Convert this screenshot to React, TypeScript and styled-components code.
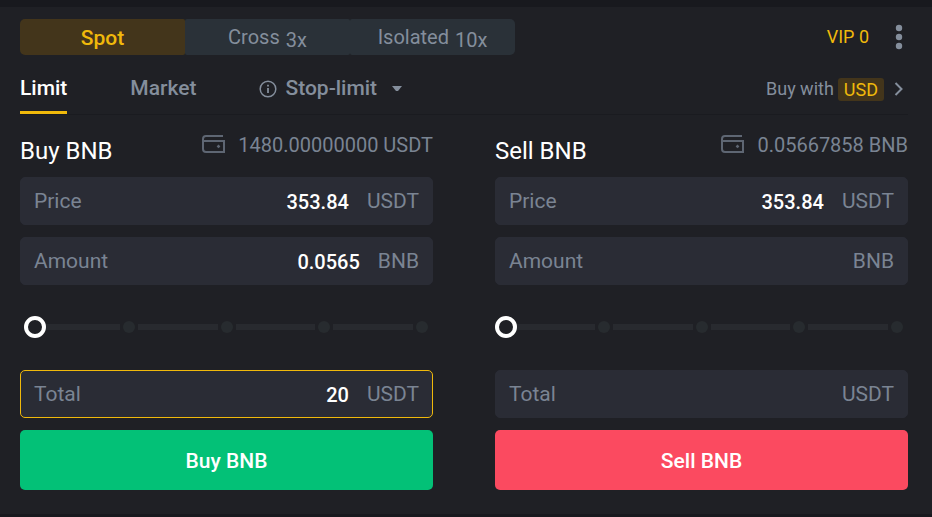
import React, { useState } from "react";
import styled, { createGlobalStyle, css } from "styled-components";

const color = {
  page: "#18191e",
  panel: "#1f2025",
  field: "#2a2c35",
  tab: "#2a3138",
  tabActive: "#43351b",
  track: "#282a2f",
  dot: "#272b2f",
  line: "#1a1b20",
  text: "#848e9c",
  muted: "#7a8493",
  icon: "#5e6673",
  yellow: "#f0b90b",
  white: "#ffffff",
  green: "#03c177",
  red: "#fb4a60",
};

const GlobalStyle = createGlobalStyle`
  *, *::before, *::after { box-sizing: border-box; }
  body {
    margin: 0;
    background: ${color.page};
    color: ${color.text};
    font-family: Roboto, "Liberation Sans", sans-serif;
    font-size: 20px;
    line-height: 24px;
  }
  button, input { font: inherit; color: inherit; border: 0; margin: 0; padding: 0; background: none; }
  button { cursor: pointer; }
`;

const Page = styled.div`
  padding: 7px 0 3px;
`;

const Panel = styled.main`
  background: ${color.panel};
  padding: 12px 24px 24px 20px;
`;

const TopBar = styled.header`
  display: flex;
  align-items: center;
  justify-content: space-between;
`;

const ModeTabs = styled.div`
  display: grid;
  grid-template-columns: repeat(3, 165px);
`;

const ModeTab = styled.button<{ $active?: boolean }>`
  height: 36px;
  padding-top: 2px;
  border-radius: 2px;
  background: ${(p) => (p.$active ? color.tabActive : color.tab)};
  color: ${(p) => (p.$active ? color.yellow : color.text)};
  font-size: ${(p) => (p.$active ? 21 : 20)}px;
  font-weight: ${(p) => (p.$active ? 500 : 400)};
  &:first-child { border-radius: 5px 2px 2px 5px; }
  &:last-child { border-radius: 2px 5px 5px 2px; }
`;

const Leverage = styled.span`
  display: inline-block;
  padding: 3px 0 0 6px;
  vertical-align: top;
`;

const Account = styled.div`
  display: flex;
  align-items: center;
  gap: 23px;
  padding-right: 2px;
`;

const VipLink = styled.a`
  color: ${color.yellow};
  font-size: 18px;
  text-decoration: none;
`;

const IconButton = styled.button`
  display: flex;
`;

const OrderBar = styled.nav`
  display: flex;
  align-items: flex-end;
  justify-content: space-between;
  border-bottom: 1px solid ${color.line};
  padding-top: 18px;
`;

const OrderTabs = styled.div`
  display: flex;
  gap: 63px;
`;

const OrderTab = styled.button<{ $active?: boolean }>`
  display: flex;
  align-items: center;
  gap: 8px;
  height: 41px;
  padding-bottom: 8px;
  font-weight: 500;
  font-size: 21px;
  border-bottom: 3px solid transparent;
  ${(p) =>
    p.$active &&
    css`
      color: ${color.white};
      border-color: ${color.yellow};
    `}
`;

const FiatLink = styled.a`
  display: flex;
  align-items: center;
  gap: 4px;
  padding: 0 5px 13px 0;
  color: ${color.text};
  font-size: 18px;
  text-decoration: none;
  svg { margin-left: 6px; }
`;

const Currency = styled.span`
  padding: 0 6px;
  border-radius: 3px;
  background: ${color.tabActive};
  color: ${color.yellow};
  line-height: 23px;
`;

const Forms = styled.div`
  display: grid;
  grid-template-columns: 1fr 1fr;
  gap: 62px;
  padding-top: 16px;
`;

const Form = styled.form`
  display: flex;
  flex-direction: column;
  gap: 12px;
  min-width: 0;
`;

const FormHead = styled.div`
  display: flex;
  justify-content: space-between;
  height: 34px;
`;

const Title = styled.h2`
  margin: 0;
  padding-top: 6px;
  color: ${color.white};
  font-size: 24px;
  font-weight: 400;
  line-height: 28px;
`;

const Balance = styled.div`
  display: flex;
  align-items: center;
  align-self: flex-start;
  gap: 12px;
  padding-top: 2px;
  color: ${color.muted};
`;

const Field = styled.label<{ $focused?: boolean }>`
  display: flex;
  align-items: center;
  height: 48px;
  padding: 0 13px;
  border: 1px solid ${(p) => (p.$focused ? color.yellow : color.field)};
  border-radius: 5px;
  background: ${color.field};
  color: ${color.muted};
  font-size: 21px;
`;

const FieldInput = styled.input`
  flex: 1;
  min-width: 0;
  margin: 0 18px;
  padding-top: 2px;
  color: ${color.white};
  font-size: 20px;
  font-weight: 500;
  text-align: right;
  outline: none;
`;

const SliderBox = styled.div`
  display: grid;
  align-items: center;
  height: 22px;
  margin: 19px 0 20px;
  & > * { grid-area: 1 / 1; }
`;

const Steps = styled.div`
  display: flex;
  align-items: center;
  gap: 3px;
  padding: 0 5px;
`;

const Step = styled.span`
  width: 12px;
  height: 12px;
  border-radius: 50%;
  background: ${color.dot};
`;

const Segment = styled.span`
  flex: 1;
  height: 6px;
  background: ${color.track};
`;

const thumb = css`
  width: 22px;
  height: 22px;
  border: 4px solid ${color.white};
  border-radius: 50%;
  background: ${color.panel};
  box-sizing: border-box;
`;

const Range = styled.input`
  appearance: none;
  width: 100%;
  height: 22px;
  cursor: pointer;
  &::-webkit-slider-thumb { appearance: none; ${thumb} }
  &::-moz-range-thumb { ${thumb} }
`;

const Submit = styled.button<{ $side: Side }>`
  height: 60px;
  padding-top: 2px;
  border-radius: 5px;
  background: ${(p) => (p.$side === "Buy" ? color.green : color.red)};
  color: ${color.white};
  font-size: 21px;
  font-weight: 500;
`;

type Side = "Buy" | "Sell";

const MoreIcon = () => (
  <svg width="14" height="26" viewBox="0 0 14 26" fill={color.text}>
    <circle cx="7" cy="4" r="3.200" />
    <circle cx="7" cy="13" r="3.200" />
    <circle cx="7" cy="22" r="3.200" />
  </svg>
);

const InfoIcon = () => (
  <svg width="18" height="20" viewBox="0 0 18 20" fill="none" stroke={color.text}>
    <circle cx="9" cy="11" r="7.8" strokeWidth="1.5" />
    <path d="M9 10v5" strokeWidth="1.8" />
    <path d="M9 6.800v1.8" strokeWidth="1.8" />
  </svg>
);

const CaretIcon = () => (
  <svg width="22" height="8" viewBox="0 0 22 8" fill={color.text}>
    <path d="M7 2h10l-4 5h-2z" />
  </svg>
);

const ChevronIcon = () => (
  <svg width="9" height="14" viewBox="0 0 9 14" fill="none" stroke={color.text} strokeWidth="2">
    <path d="M1.5 1l6 6-6 6" />
  </svg>
);

const WalletIcon = () => (
  <svg width="24" height="20" viewBox="0 0 24 20" fill="none" stroke={color.icon} strokeWidth="2">
    <path d="M21 1H4Q1 1 1 4V14Q1 17 4 17H22V6H1" />
    <path d="M16.500 9.500l1.900 1.900-1.900 1.900-1.900-1.900z" fill={color.icon} stroke="none" />
  </svg>
);

interface FieldRowProps {
  label: string;
  unit: string;
  value?: string;
  focused?: boolean;
}

function FieldRow({ label, unit, value = "", focused }: FieldRowProps) {
  const [text, setText] = useState(value);
  return (
    <Field $focused={focused}>
      <span>{label}</span>
      <FieldInput inputMode="decimal" value={text} onChange={(e) => setText(e.target.value)} />
      <span>{unit}</span>
    </Field>
  );
}

interface OrderFormProps {
  side: Side;
  balance: string;
  price: string;
  amount?: string;
  total?: string;
  percent: number;
  totalFocused?: boolean;
}

function OrderForm({ side, balance, price, amount, total, percent, totalFocused }: OrderFormProps) {
  const [share, setShare] = useState(percent);
  return (
    <Form onSubmit={(e) => e.preventDefault()}>
      <FormHead>
        <Title>{side} BNB</Title>
        <Balance>
          <WalletIcon />
          <span>{balance}</span>
        </Balance>
      </FormHead>
      <FieldRow label="Price" unit="USDT" value={price} />
      <FieldRow label="Amount" unit="BNB" value={amount} />
      <SliderBox>
        <Steps>
          <Step />
          {[25, 50, 75, 100].map((mark) => (
            <React.Fragment key={mark}>
              <Segment />
              <Step />
            </React.Fragment>
          ))}
        </Steps>
        <Range
          type="range"
          min={0}
          max={100}
          value={share}
          aria-label={`${side} share of balance`}
          onChange={(e) => setShare(Number(e.target.value))}
        />
      </SliderBox>
      <FieldRow label="Total" unit="USDT" value={total} focused={totalFocused} />
      <Submit type="submit" $side={side}>
        {side} BNB
      </Submit>
    </Form>
  );
}

export default function App() {
  return (
    <Page>
      <GlobalStyle />
      <Panel>
        <TopBar>
          <ModeTabs>
            <ModeTab $active>Spot</ModeTab>
            <ModeTab>
              Cross<Leverage>3x</Leverage>
            </ModeTab>
            <ModeTab>
              Isolated<Leverage>10x</Leverage>
            </ModeTab>
          </ModeTabs>
          <Account>
            <VipLink href="#vip">VIP 0</VipLink>
            <IconButton aria-label="More">
              <MoreIcon />
            </IconButton>
          </Account>
        </TopBar>
        <OrderBar>
          <OrderTabs>
            <OrderTab $active>Limit</OrderTab>
            <OrderTab>Market</OrderTab>
            <OrderTab>
              <InfoIcon />
              Stop-limit
              <CaretIcon />
            </OrderTab>
          </OrderTabs>
          <FiatLink href="#buy">
            Buy with <Currency>USD</Currency>
            <ChevronIcon />
          </FiatLink>
        </OrderBar>
        <Forms>
          <OrderForm
            side="Buy"
            balance="1480.00000000 USDT"
            price="353.84"
            amount="0.0565"
            total="20"
            percent={1}
            totalFocused
          />
          <OrderForm side="Sell" balance="0.05667858 BNB" price="353.84" percent={0} />
        </Forms>
      </Panel>
    </Page>
  );
}
